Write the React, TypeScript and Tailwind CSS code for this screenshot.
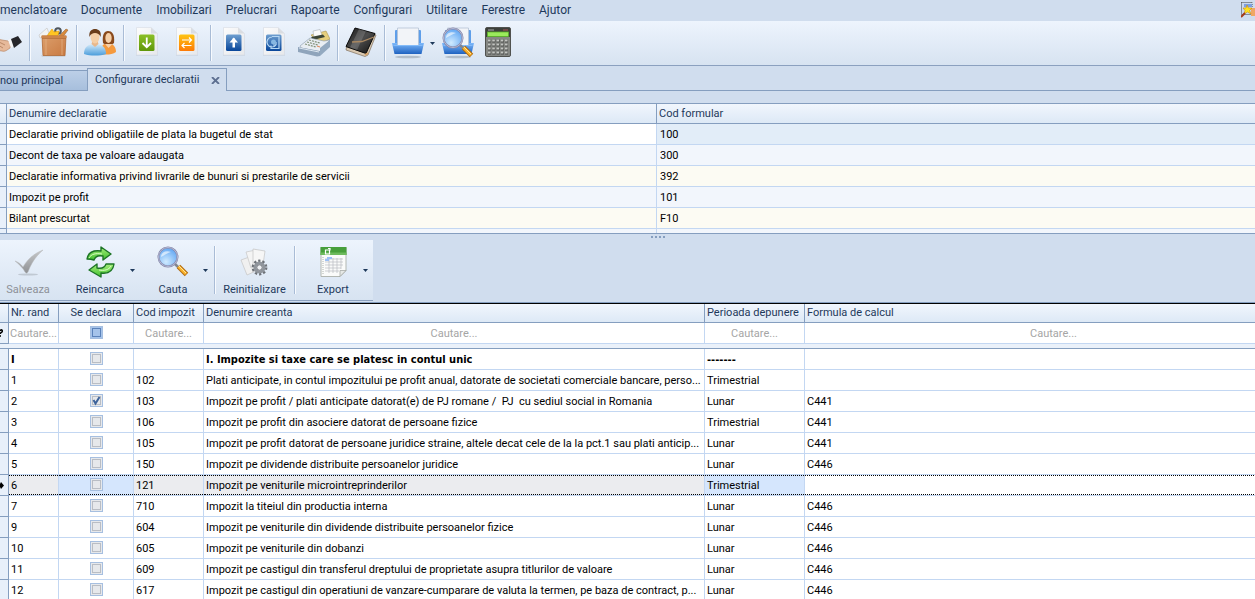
import type { ReactNode } from "react";
import clsx from "clsx";

interface Declaratie {
    denumire: string,
    cod: string
}

interface Creanta {
    nr: string,
    declara?: boolean,
    cod: string,
    denumire: string,
    perioada: string,
    formula: string
}

const meniuri = ["menclatoare", "Documente", "Imobilizari", "Prelucrari", "Rapoarte", "Configurari", "Utilitare", "Ferestre", "Ajutor"]

const declaratii: Declaratie[] = [
    { denumire: "Declaratie privind obligatiile de plata la bugetul de stat", cod: "100" },
    { denumire: "Decont de taxa pe valoare adaugata", cod: "300" },
    { denumire: "Declaratie informativa privind livrarile de bunuri si prestarile de servicii", cod: "392" },
    { denumire: "Impozit pe profit", cod: "101" },
    { denumire: "Bilant prescurtat", cod: "F10" },
]

const creante: Creanta[] = [
    { nr: "I", cod: "", denumire: "I. Impozite si taxe care se platesc in contul unic", perioada: "-------", formula: "" },
    { nr: "1", cod: "102", denumire: "Plati anticipate, in contul impozitului pe profit anual, datorate de societati comerciale bancare, perso...", perioada: "Trimestrial", formula: "" },
    { nr: "2", declara: true, cod: "103", denumire: "Impozit pe profit / plati anticipate datorat(e) de PJ romane /  PJ  cu sediul social in Romania", perioada: "Lunar", formula: "C441" },
    { nr: "3", cod: "106", denumire: "Impozit pe profit din asociere datorat de persoane fizice", perioada: "Trimestrial", formula: "C441" },
    { nr: "4", cod: "105", denumire: "Impozit pe profit datorat de persoane juridice straine, altele decat cele de la la pct.1 sau plati anticip...", perioada: "Lunar", formula: "C441" },
    { nr: "5", cod: "150", denumire: "Impozit pe dividende distribuite persoanelor juridice", perioada: "Lunar", formula: "C446" },
    { nr: "6", cod: "121", denumire: "Impozit pe veniturile microintreprinderilor", perioada: "Trimestrial", formula: "" },
    { nr: "7", cod: "710", denumire: "Impozit la titeiul din productia interna", perioada: "Lunar", formula: "C446" },
    { nr: "9", cod: "604", denumire: "Impozit pe veniturile din dividende distribuite persoanelor fizice", perioada: "Lunar", formula: "C446" },
    { nr: "10", cod: "605", denumire: "Impozit pe veniturile din dobanzi", perioada: "Lunar", formula: "C446" },
    { nr: "11", cod: "609", denumire: "Impozit pe castigul din transferul dreptului de proprietate asupra titlurilor de valoare", perioada: "Lunar", formula: "C446" },
    { nr: "12", cod: "617", denumire: "Impozit pe castigul din operatiuni de vanzare-cumparare de valuta la termen, pe baza de contract, p...", perioada: "Lunar", formula: "C446" },
]

const coloane = ["Nr. rand", "Se declara", "Cod impozit", "Denumire creanta", "Perioada depunere", "Formula de calcul"]

/* Iconite */

function Icon({ children, className = "size-8" }: { children: ReactNode, className?: string }) {
    return <svg viewBox="0 0 32 32" className={clsx("block shrink-0", className)} fill="none" aria-hidden="true">{children}</svg>
}

// Degradeuri comune tuturor iconitelor
function Gradients() {
    return (
        <svg className="absolute size-0" aria-hidden="true">
            <defs>
                <linearGradient id="gGreen" x2="0" y2="1"><stop stopColor="#8cc026" /><stop offset="1" stopColor="#5f9708" /></linearGradient>
                <linearGradient id="gOrange" x2="0" y2="1"><stop stopColor="#ffc412" /><stop offset="1" stopColor="#fd7a07" /></linearGradient>
                <linearGradient id="gBlue" x2="0" y2="1"><stop stopColor="#6f9fd0" /><stop offset="1" stopColor="#08469a" /></linearGradient>
                <linearGradient id="gPage" x2="1" y2="1"><stop stopColor="#fcfcfc" /><stop offset="1" stopColor="#e6e8eb" /></linearGradient>
                <linearGradient id="gTray" x2="0" y2="1"><stop stopColor="#7db9fb" /><stop offset="1" stopColor="#1f62c0" /></linearGradient>
                <linearGradient id="gBox" x2="1" y2="1"><stop stopColor="#dc9f6c" /><stop offset="1" stopColor="#c97a42" /></linearGradient>
                <linearGradient id="gDark" x2="1" y2="1"><stop stopColor="#1a1a1a" /><stop offset=".5" stopColor="#4c4c4c" /><stop offset="1" stopColor="#0c0c0c" /></linearGradient>
                <linearGradient id="gShirt" x2="0" y2="1"><stop stopColor="#d5ebfa" /><stop offset="1" stopColor="#4b9ddb" /></linearGradient>
                <linearGradient id="gCheck" x2="0" y2="1"><stop stopColor="#c6c8ca" /><stop offset="1" stopColor="#8f9194" /></linearGradient>
                <linearGradient id="gArrow" x2="0" y2="1"><stop stopColor="#a6ee7c" /><stop offset="1" stopColor="#3fbf2c" /></linearGradient>
                <radialGradient id="gLens" cx=".4" cy=".75" r=".8"><stop stopColor="#cfeaff" /><stop offset="1" stopColor="#5aa2f2" /></radialGradient>
            </defs>
        </svg>
    )
}

function HandshakeIcon() {
    return (
        <Icon>
            <path d="M0 14c4-2 8-2 12-1l6 1 3 3-1 4c-3 2-5 4-8 3l-8-1-4-2z" fill="#e6b99a" stroke="#b98764" strokeWidth=".7" />
            <path d="M9 15l6 3M8 18l5 3M7 20l3 2" stroke="#b07c5a" strokeWidth=".8" />
            <path d="M18 13l3-1 3 7-3 2z" fill="#f5f5f5" />
            <path d="M21 12l7-3 4 6-8 6z" fill="#26262a" />
        </Icon>
    )
}

function BoxIcon() {
    return (
        <Icon>
            <path d="M2 8l8-7 3 8-10 2z" fill="#f3f3f1" stroke="#c3c3c3" strokeWidth=".6" />
            <circle cx="21" cy="4" r="2.800" stroke="#4f565e" strokeWidth="2" />
            <path d="M12 6l3-4 2 3 5-1-1 5H10z" fill="#ffc524" stroke="#e59a00" strokeWidth=".6" />
            <path d="M22 9l7-7 2 1-6 8z" fill="#d98a3c" stroke="#8b5a24" strokeWidth=".5" />
            <path d="M4 28.500l1 1h23l1-1z" fill="#8f8f8f" opacity=".4" />
            <path d="M5 9h24l-1 19.500H6z" fill="url(#gBox)" stroke="#b06a35" strokeWidth=".8" />
            <path d="M9 12v16M25 12v16" stroke="#e3b083" strokeWidth=".8" />
            <path d="M4.500 8.500h25v2.500h-25z" fill="#cd8449" />
            <path d="M5 11.500h24" stroke="#a9632e" strokeWidth=".6" />
        </Icon>
    )
}

function PeopleIcon() {
    return (
        <Icon>
            <path d="M16 27c0-7 3-11 8-11s8 4 8 9c-4 3-11 3-16 2z" fill="#f59a3e" />
            <path d="M19 16c-1-8 1-12 5-12s7 3 6 12c-2 2-9 2-11 0z" fill="#8a4a1c" />
            <ellipse cx="24.500" cy="11" rx="3.200" ry="5" fill="#f6d0a8" />
            <path d="M21 17l3.500 4 4-4z" fill="#f6d0a8" />
            <path d="M0 27c0-7 4-10 11-10s11 3 11 10c-6 2-16 2-22 0z" fill="url(#gShirt)" />
            <path d="M7.500 17l3.500 3 3.500-3-1-3h-5z" fill="#e8b88c" />
            <ellipse cx="11" cy="10" rx="4.500" ry="6.500" fill="#f5cfa6" />
            <path d="M5.500 10C4.500 4 8 2 11 2s7 2 5.500 8c-1-3-3-4-5.500-4S6.500 7 5.500 10z" fill="#6a3d1a" />
        </Icon>
    )
}

function PageIcon({ fill, children }: { fill: string, children: ReactNode }) {
    return (
        <Icon>
            <path d="M5 1h15l7 7v21H5z" fill="#8995a5" opacity=".15" />
            <path d="M5.500.5H20l6.500 6V28h-21z" fill="url(#gPage)" stroke="#d6dce4" strokeWidth=".6" />
            <path d="M20 .5v6h6.500z" fill="#dadde2" />
            <rect x="8" y="7.500" width="15.500" height="16.500" rx="1.500" fill={fill} />
            {children}
        </Icon>
    )
}

function RegisterIcon() {
    return (
        <Icon>
            <path d="M13 8l15-4 4 8-10 5z" fill="#e6cf7d" stroke="#a8904a" strokeWidth=".6" />
            <path d="M15 4l7-1.500 2 6-8 2z" fill="#fafafa" stroke="#a9b0b8" strokeWidth=".6" />
            <path d="M13 10l12-2.500 2 2.500-12 3z" fill="#3b4436" />
            <path d="M2 19l10-8 14 3 6-1-10 12-19-4z" fill="#e9eef3" stroke="#8797a8" strokeWidth=".6" />
            <path d="M22 21l10-8v7l-10 9z" fill="#93a9c0" />
            <path d="M0 20l22 4v5l-3 .5L0 25z" fill="#8fa4bb" />
            <path d="M1 21l20 4" stroke="#dbe6f0" />
            <path d="M9 15l11 3M7 17l11 3M11 13l11 3" stroke="#83927a" strokeWidth="1.200" strokeDasharray="2 1" />
            <path d="M19 19l3 1" stroke="#e08a5f" strokeWidth="1.200" />
        </Icon>
    )
}

function BookIcon() {
    return (
        <Icon>
            <path d="M31 8l-8 20-3 1.500L1 23l.5-3L21 26l8-19z" fill="#d9c9b2" stroke="#6e5c48" strokeWidth=".6" />
            <path d="M10 1l20 5.500-9 20L1 19.500z" fill="url(#gDark)" stroke="#0a0a0a" />
            <path d="M14 2l7 2-9 19-7-2.500z" fill="#fff" opacity=".16" />
            <path d="M7 15l10-.5L29 10" stroke="#a98862" strokeWidth="1.300" />
            <path d="M20 28l3-2" stroke="#d9a56c" strokeWidth="2" />
        </Icon>
    )
}

function TrayShape() {
    return (
        <>
            <ellipse cx="16" cy="30" rx="13" ry="1.300" fill="#8e9aa8" opacity=".55" />
            <rect x="3" y="3" width="26" height="16" rx="1" fill="#5e9ee9" />
            <path d="M5.500 1h21v18h-21z" fill="#f2f4f8" stroke="#b5c3d6" strokeWidth=".8" />
            <path d="M0 16h5v2h22v-2h5l-2.500 11h-27z" fill="url(#gTray)" />
            <path d="M1.500 18.500h29" stroke="#8cc0fa" strokeWidth=".8" />
        </>
    )
}

function LensShape() {
    return (
        <>
            <path d="M18 18l4 4" stroke="#83878f" strokeWidth="2.500" />
            <path d="M21.500 20.500l8 8" stroke="#b06a10" strokeWidth="5" />
            <path d="M21.500 20.500l7.500 7.500" stroke="#fbb32b" strokeWidth="3" />
            <path d="M22 20l7 7" stroke="#ffe59a" />
            <circle cx="11" cy="11" r="9.500" fill="url(#gLens)" stroke="#8084a8" strokeWidth="2" />
            <circle cx="11" cy="11" r="9.500" stroke="#c4c7de" strokeWidth=".8" />
            <path d="M4 11c0-5 5-7 10-5-4 1-6 3-10 5z" fill="#fff" opacity=".6" />
        </>
    )
}

function CalculatorIcon() {
    return (
        <Icon>
            <rect x="3.500" y=".5" width="25" height="29" rx="1.500" fill="#858783" stroke="#50524f" />
            <path d="M4 1h24v9H4z" fill="#3d403b" />
            <path d="M6 3h6" stroke="#aaa" />
            <path d="M21 3h5" stroke="#a55" />
            <rect x="5.500" y="5" width="21" height="4.500" fill="#9bea5c" stroke="#5cb32c" strokeWidth=".8" />
            <path d="M6 14h20M6 18h20M6 22h20M6 26h20" stroke="#4b4d4a" strokeWidth="3" strokeDasharray="3.200 1.050" />
            <path d="M6 13.500h20M6 17.500h20M6 21.500h20M6 25.500h20" stroke="#c3c5c1" strokeWidth="1.800" strokeDasharray="2.600 1.650" />
        </Icon>
    )
}

function RefreshIcon() {
    return (
        <Icon>
            <path d="M3 13C4 7 9 4 17 5V1l10 7-8 6v-4c-5-1-8 1-9 4-3-1-4-1-7-1z" fill="url(#gArrow)" stroke="#1d7426" strokeWidth="1.400" strokeLinejoin="round" />
            <path d="M30 18c-1 7-6 10-13 9v4L5 24l8-6v4c5 1 8-1 9-4z" fill="url(#gArrow)" stroke="#1d7426" strokeWidth="1.400" strokeLinejoin="round" />
            <path d="M5 12c2-4 7-5 13-4M27 20c-2 4-7 5-12 4" stroke="#e4ffd0" strokeWidth=".9" />
        </Icon>
    )
}

function SaveIcon() {
    return (
        <Icon>
            <ellipse cx="16" cy="28.500" rx="10" ry="1" fill="#9fa7b0" opacity=".5" />
            <path d="M3 15c3 1 6 3 8 6C15 14 21 8 31 4 23 11 19 18 16 26c-1 1.500-2 1.500-3 0-2-4-6-8-10-11z" fill="url(#gCheck)" stroke="#b9bbbd" strokeWidth=".5" />
        </Icon>
    )
}

function ResetIcon() {
    return (
        <Icon>
            <path d="M2 14l11-4 4 15-9 4z" fill="#f0f0f0" stroke="#c4c4c4" strokeWidth=".7" />
            <path d="M7 6l10-2 5 15-10 3z" fill="#f4f4f4" stroke="#c6c6c6" strokeWidth=".7" />
            <path d="M14 3l12 2-2 14-10 1z" fill="#f6f6f6" stroke="#c3c3c3" strokeWidth=".7" />
            <circle cx="20.500" cy="21.500" r="6.500" stroke="#6e7278" strokeWidth="2.800" strokeDasharray="2.200 1.880" />
            <circle cx="20.500" cy="21.500" r="4.500" fill="#e6e9ee" stroke="#90959c" strokeWidth="3" />
            <circle cx="20.500" cy="21.500" r="2.700" fill="#eef0f3" stroke="#5d6167" strokeWidth=".8" />
        </Icon>
    )
}

function ExportIcon() {
    return (
        <Icon>
            <path d="M4 1.500h25v23l-6 6H4z" fill="#fafbfa" stroke="#b2b7b2" />
            <path d="M3.500 1h26v8h-26z" fill="#479f3b" />
            <path d="M3.500 6.500h26V9h-26z" fill="#6dba5d" />
            <path d="M8.500 4h4v4h-4zM11 2.500h2v2" stroke="#fff" strokeWidth="1.200" />
            <path d="M6 11v17" stroke="#aeb4ae" strokeDasharray="1 1" />
            <path d="M8 13h18M8 16h18M8 19h18M8 22h16M8 25h14M12 12v15M16 12v15M20 12v15M24 12v11" stroke="#b7bcc0" strokeWidth=".7" />
            <path d="M10 12h5M8 14h4" stroke="#9cc0f5" strokeWidth="2" />
            <path d="M29 24.500h-6v6z" fill="#e6e9e6" stroke="#9ca19c" strokeWidth=".7" />
        </Icon>
    )
}

function WizardIcon() {
    return (
        <svg viewBox="0 0 14 16" className="block h-4 w-[14px] shrink-0" fill="none" aria-hidden="true">
            <path d="M.5.500H11v12H.5z" fill="#c9d8ee" stroke="#3e3e3e" strokeDasharray="1 1" />
            <path d="M3 2h8v3H3z" fill="#7d9fe0" />
            <path d="M10 6h4v8h-4z" fill="#f0a765" />
            <path d="M6 3l1.500 3L11 6 8.500 8.500 10 12 6.500 10 3 12l1-3.500L2 6l3 0z" fill="#ffe11a" stroke="#c48a12" strokeWidth=".6" />
            <path d="M0 15l4-4" stroke="#a33b1a" strokeWidth="2" />
        </svg>
    )
}

/* Elemente de bara */

function Separator({ className = "my-1" }: { className?: string }) {
    return (
        <div className={clsx("flex w-[7px] shrink-0 justify-center", className)}>
            <div className="w-px bg-[#a9bcd6]" />
            <div className="w-px bg-[#f7fafe]" />
        </div>
    )
}

function DropArrow({ label }: { label: string }) {
    return (
        <button aria-label={label} className="flex w-[10px] shrink-0 items-center pl-[2px]">
            <svg viewBox="0 0 5 3" className="h-[3px] w-[5px]" aria-hidden="true"><path d="M0 0h5L2.500 3z" fill="#1e395b" /></svg>
        </button>
    )
}

function ToolButton({ label, className = "w-10 justify-center", children }: { label: string, className?: string, children: ReactNode }) {
    return <button title={label} aria-label={label} className={clsx("flex shrink-0 items-center overflow-hidden", className)}>{children}</button>
}

function ActionButton({ label, className = "w-14", disabled, children }: { label: string, className?: string, disabled?: boolean, children: ReactNode }) {
    return (
        <button disabled={disabled} className={clsx("flex shrink-0 flex-col items-center gap-1 pt-1.5 leading-4", className, disabled ? "text-[#8d9097]" : "text-[#1e395b]")}>
            {children}
            <span className="whitespace-nowrap">{label}</span>
        </button>
    )
}

function CheckBox({ label, checked, filter }: { label: string, checked?: boolean, filter?: boolean }) {
    return (
        <span className="relative mx-auto block size-[13px]">
            <input
                type="checkbox"
                aria-label={label}
                defaultChecked={checked}
                className={clsx(
                    "block size-[13px] appearance-none border border-[#a6bfe0] outline-1 -outline-offset-3",
                    filter ? "bg-[#a5c3ea] outline-[#5b82ba]" : "bg-[#e6e8eb] outline-[#b9bdc4]"
                )}
            />
            {checked
                ? <svg viewBox="0 0 13 13" className="pointer-events-none absolute inset-0 size-[13px]" fill="none" aria-hidden="true"><path d="M3.500 6l2 3.500 4-6.500" stroke="#3d639b" strokeWidth="2" /></svg>
                : null}
        </span>
    )
}

export default function App() {
    const th = "truncate border-b border-[#859ebf] bg-linear-to-b from-[#f1f6fd] to-[#dde9f6] p-0 px-[2px] font-normal text-[#1e395b]"
    const indicator = "border-r border-b border-[#859ebf] bg-[#e8f0fa] p-0"

    return (
        <div className="h-screen overflow-hidden bg-[#d0ddee] font-['Roboto',sans-serif] text-[11px] text-black">
            <Gradients />

            {/* Meniul principal */}
            <nav className="flex h-[21px] items-center justify-between pb-[2px] text-[12px] leading-4 text-[#1e395b]">
                <div className="flex gap-[14px]">
                    {meniuri.map(meniu => <button key={meniu}>{meniu}</button>)}
                </div>
                <WizardIcon />
            </nav>

            {/* Bara de instrumente */}
            <div className="flex h-[45px] border-b border-[#8ba0bf] bg-linear-to-b from-[#edf4fd] to-[#d7e3f1]">
                <ToolButton label="Parteneri" className="w-[26px] justify-end pr-1"><HandshakeIcon /></ToolButton>
                <Separator />
                <ToolButton label="Produse"><BoxIcon /></ToolButton>
                <Separator />
                <ToolButton label="Personal"><PeopleIcon /></ToolButton>
                <Separator />
                <ToolButton label="Intrari"><PageIcon fill="url(#gGreen)"><path d="M15.750 10.500v9M11.500 16l4.250 4.250L20 16" stroke="#fff" strokeWidth="1.800" /></PageIcon></ToolButton>
                <ToolButton label="Transferuri"><PageIcon fill="url(#gOrange)"><path d="M11 13h9M18 10.500l2.500 2.500-2.500 2.500M20.500 18.500h-9M13.500 16L11 18.500l2.500 2.500" stroke="#fff" strokeWidth="1.200" /></PageIcon></ToolButton>
                <Separator />
                <ToolButton label="Iesiri"><PageIcon fill="url(#gBlue)"><path d="M15.750 11.500v9" stroke="#fff" strokeWidth="2.500" /><path d="M11.500 15.500l4.250-5 4.250 5z" fill="#fff" /></PageIcon></ToolButton>
                <ToolButton label="Retururi"><PageIcon fill="url(#gBlue)"><path d="M14 9.500h7v12h-8v-3M14 10a5 5 0 1 0 4 8M18 18v-3M18 18h-3" stroke="#b5d6f2" strokeWidth="1.200" /><circle cx="15.500" cy="15" r="2.500" fill="#86b7e2" /></PageIcon></ToolButton>
                <ToolButton label="Casa"><RegisterIcon /></ToolButton>
                <Separator />
                <ToolButton label="Registru"><BookIcon /></ToolButton>
                <Separator />
                <ToolButton label="Documente"><Icon><TrayShape /></Icon></ToolButton>
                <DropArrow label="Optiuni documente" />
                <ToolButton label="Cautare documente"><Icon><TrayShape /><LensShape /></Icon></ToolButton>
                <ToolButton label="Calculator"><CalculatorIcon /></ToolButton>
            </div>

            {/* Tab-uri */}
            <div className="flex h-[25px] items-end text-[#1e395b]">
                <button className="flex h-[21px] w-[87px] items-center border-t border-b border-[#859ebf] bg-linear-to-b from-[#bccfe7] to-[#a7bfdd] pt-[2px]">nou principal</button>
                <div className="flex h-[23px] w-[140px] items-center justify-between border-t border-x border-[#859ebf] pr-1.5 pl-[7px]">
                    <button className="pt-px">Configurare declaratii</button>
                    <button aria-label="Inchide">
                        <svg viewBox="0 0 9 7" className="h-[7px] w-[9px]" aria-hidden="true"><path d="M1 0l7 7M8 0L1 7" stroke="#5d6f90" strokeWidth="1.800" /></svg>
                    </button>
                </div>
                <div className="h-full grow border-b border-[#859ebf]" />
            </div>

            {/* Lista de declaratii */}
            <div className="mt-3 h-[131px] overflow-hidden border-y border-[#859ebf]">
                <table className="w-full table-fixed border-separate border-spacing-0 leading-[18px]">
                    <colgroup>
                        <col className="w-[7px]" />
                        <col className="w-[650px]" />
                        <col />
                    </colgroup>
                    <thead>
                        <tr className="text-left leading-[19px]">
                            <td className={clsx(th, "border-r")} />
                            <th className={clsx(th, "border-r")}>Denumire declaratie</th>
                            <th className={th}>Cod formular</th>
                        </tr>
                    </thead>
                    <tbody>
                        {declaratii.map((d, i) => (
                            <tr key={d.cod} className={i % 2 ? "bg-[#f2f6fc]" : "bg-[#fcfbf3]"}>
                                <td className={indicator} />
                                <td className={clsx("truncate border-r border-b border-[#c3d7f2] px-[2px] pt-[2px]", i === 0 && "bg-white")}>{d.denumire}</td>
                                <td className={clsx("truncate border-b border-[#c3d7f2] px-[3px] pt-[2px]", i === 0 && "bg-[#e2edf8]")}>{d.cod}</td>
                            </tr>
                        ))}
                        <tr className="bg-[#f2f6fc]">
                            <td className={indicator}>&nbsp;</td>
                            <td className="border-r border-[#c3d7f2] p-0" />
                            <td className="p-0" />
                        </tr>
                    </tbody>
                </table>
            </div>

            {/* Separatorul dintre cele doua liste */}
            <div className="flex h-1.5 items-center justify-center gap-[2px] pl-[61px]">
                {[0, 1, 2, 3].map(p => <span key={p} className="size-[2px] bg-[#859ebf]" />)}
            </div>

            {/* Actiuni */}
            <div className="flex h-[61px] w-fit border-b border-[#8ba0bf] bg-linear-to-b from-[#edf4fd] to-[#d7e3f1] pr-[2px]">
                <ActionButton label="Salveaza" disabled><SaveIcon /></ActionButton>
                <div className="ml-4 flex">
                    <ActionButton label="Reincarca"><RefreshIcon /></ActionButton>
                    <DropArrow label="Optiuni reincarcare" />
                </div>
                <div className="ml-[7px] flex">
                    <ActionButton label="Cauta"><Icon><LensShape /></Icon></ActionButton>
                    <DropArrow label="Optiuni cautare" />
                </div>
                <Separator className="my-1.5" />
                <ActionButton label="Reinitializare" className="w-[73px]"><ResetIcon /></ActionButton>
                <Separator className="my-1.5" />
                <div className="ml-[7px] flex">
                    <ActionButton label="Export"><ExportIcon /></ActionButton>
                    <DropArrow label="Optiuni export" />
                </div>
            </div>

            {/* Lista de creante */}
            <div className="mt-px border-t border-[#859ebf]">
                <table className="w-[calc(100%+48px)] table-fixed border-separate border-spacing-0 border-t border-black bg-white leading-[18px]">
                    <colgroup>
                        <col className="w-[9px]" />
                        <col className="w-[50px]" />
                        <col className="w-[75px]" />
                        <col className="w-[70px]" />
                        <col className="w-[501px]" />
                        <col className="w-[100px]" />
                        <col />
                    </colgroup>
                    <thead>
                        <tr>
                            <td className={clsx(th, "border-r")} />
                            {coloane.map((c, i) => <th key={c} className={clsx(th, "border-r", i === 1 ? "text-center" : "text-left")}>{c}</th>)}
                        </tr>
                        {/* Randul de filtrare */}
                        <tr>
                            <td className={indicator}>
                                <svg viewBox="0 0 8 8" className="size-2" fill="none" aria-hidden="true"><path d="M0 2c1-2 3-1 2 1L.5 4v1M0 7h1" stroke="#000" strokeWidth="1.500" /></svg>
                            </td>
                            {coloane.map((c, i) => (
                                <td key={c} className={clsx("overflow-hidden border-r border-b border-[#c3d7f2] px-px align-top", i === 1 ? "pt-[3px]" : "pt-[2px]")}>
                                    {i === 1
                                        ? <CheckBox label={`Filtru ${c}`} filter />
                                        : <input aria-label={`Filtru ${c}`} placeholder="Cautare..." className="block h-[18px] w-full text-center outline-none placeholder:text-[#a5a5a5]" />}
                                </td>
                            ))}
                        </tr>
                        <tr><td colSpan={7} className="h-[5px] border-b border-[#859ebf] bg-[#eaf1fa] p-0" /></tr>
                    </thead>
                    <tbody>
                        {creante.map((c, i) => {
                            const selected = c.nr === "6"
                            const cell = "overflow-hidden whitespace-pre border-r border-b border-[#c3d7f2] px-[2px] align-top"
                            const td = clsx(cell, "pt-[2px]")
                            // Randul curent are chenar punctat si celulele editabile albastre
                            const dots = selected && "relative before:pointer-events-none before:absolute before:inset-x-0 before:inset-y-0 before:border-y before:border-dotted before:border-black"
                            return (
                                <tr key={c.nr} className={clsx(i === 0 && "font-['DejaVu_Sans_Condensed','DejaVu_Sans',sans-serif] font-bold")}>
                                    <td className={indicator}>
                                        {selected ? <svg viewBox="0 0 4 7" className="h-[7px] w-1" aria-hidden="true"><path d="M0 2l1-2 3 3.500L1 7 0 5z" fill="#000" /></svg> : null}
                                    </td>
                                    <td className={clsx(td, dots, selected && "bg-[#ebecef]")}>{c.nr}</td>
                                    <td className={clsx(cell, "pt-[3px]", dots, selected && "bg-[#d5e6fd]")}><CheckBox label={`Se declara ${c.nr}`} checked={c.declara} /></td>
                                    <td className={clsx(td, dots, selected && "bg-[#ebecef]")}>{c.cod}</td>
                                    <td className={clsx(td, dots, selected && "bg-[#ebecef]")}>{c.denumire}</td>
                                    <td className={clsx(td, dots, selected && "bg-[#d5e6fd]")}>{c.perioada}</td>
                                    <td className={clsx(td, dots)}>{c.formula}</td>
                                </tr>
                            )
                        })}
                    </tbody>
                </table>
            </div>
        </div>
    );
}
